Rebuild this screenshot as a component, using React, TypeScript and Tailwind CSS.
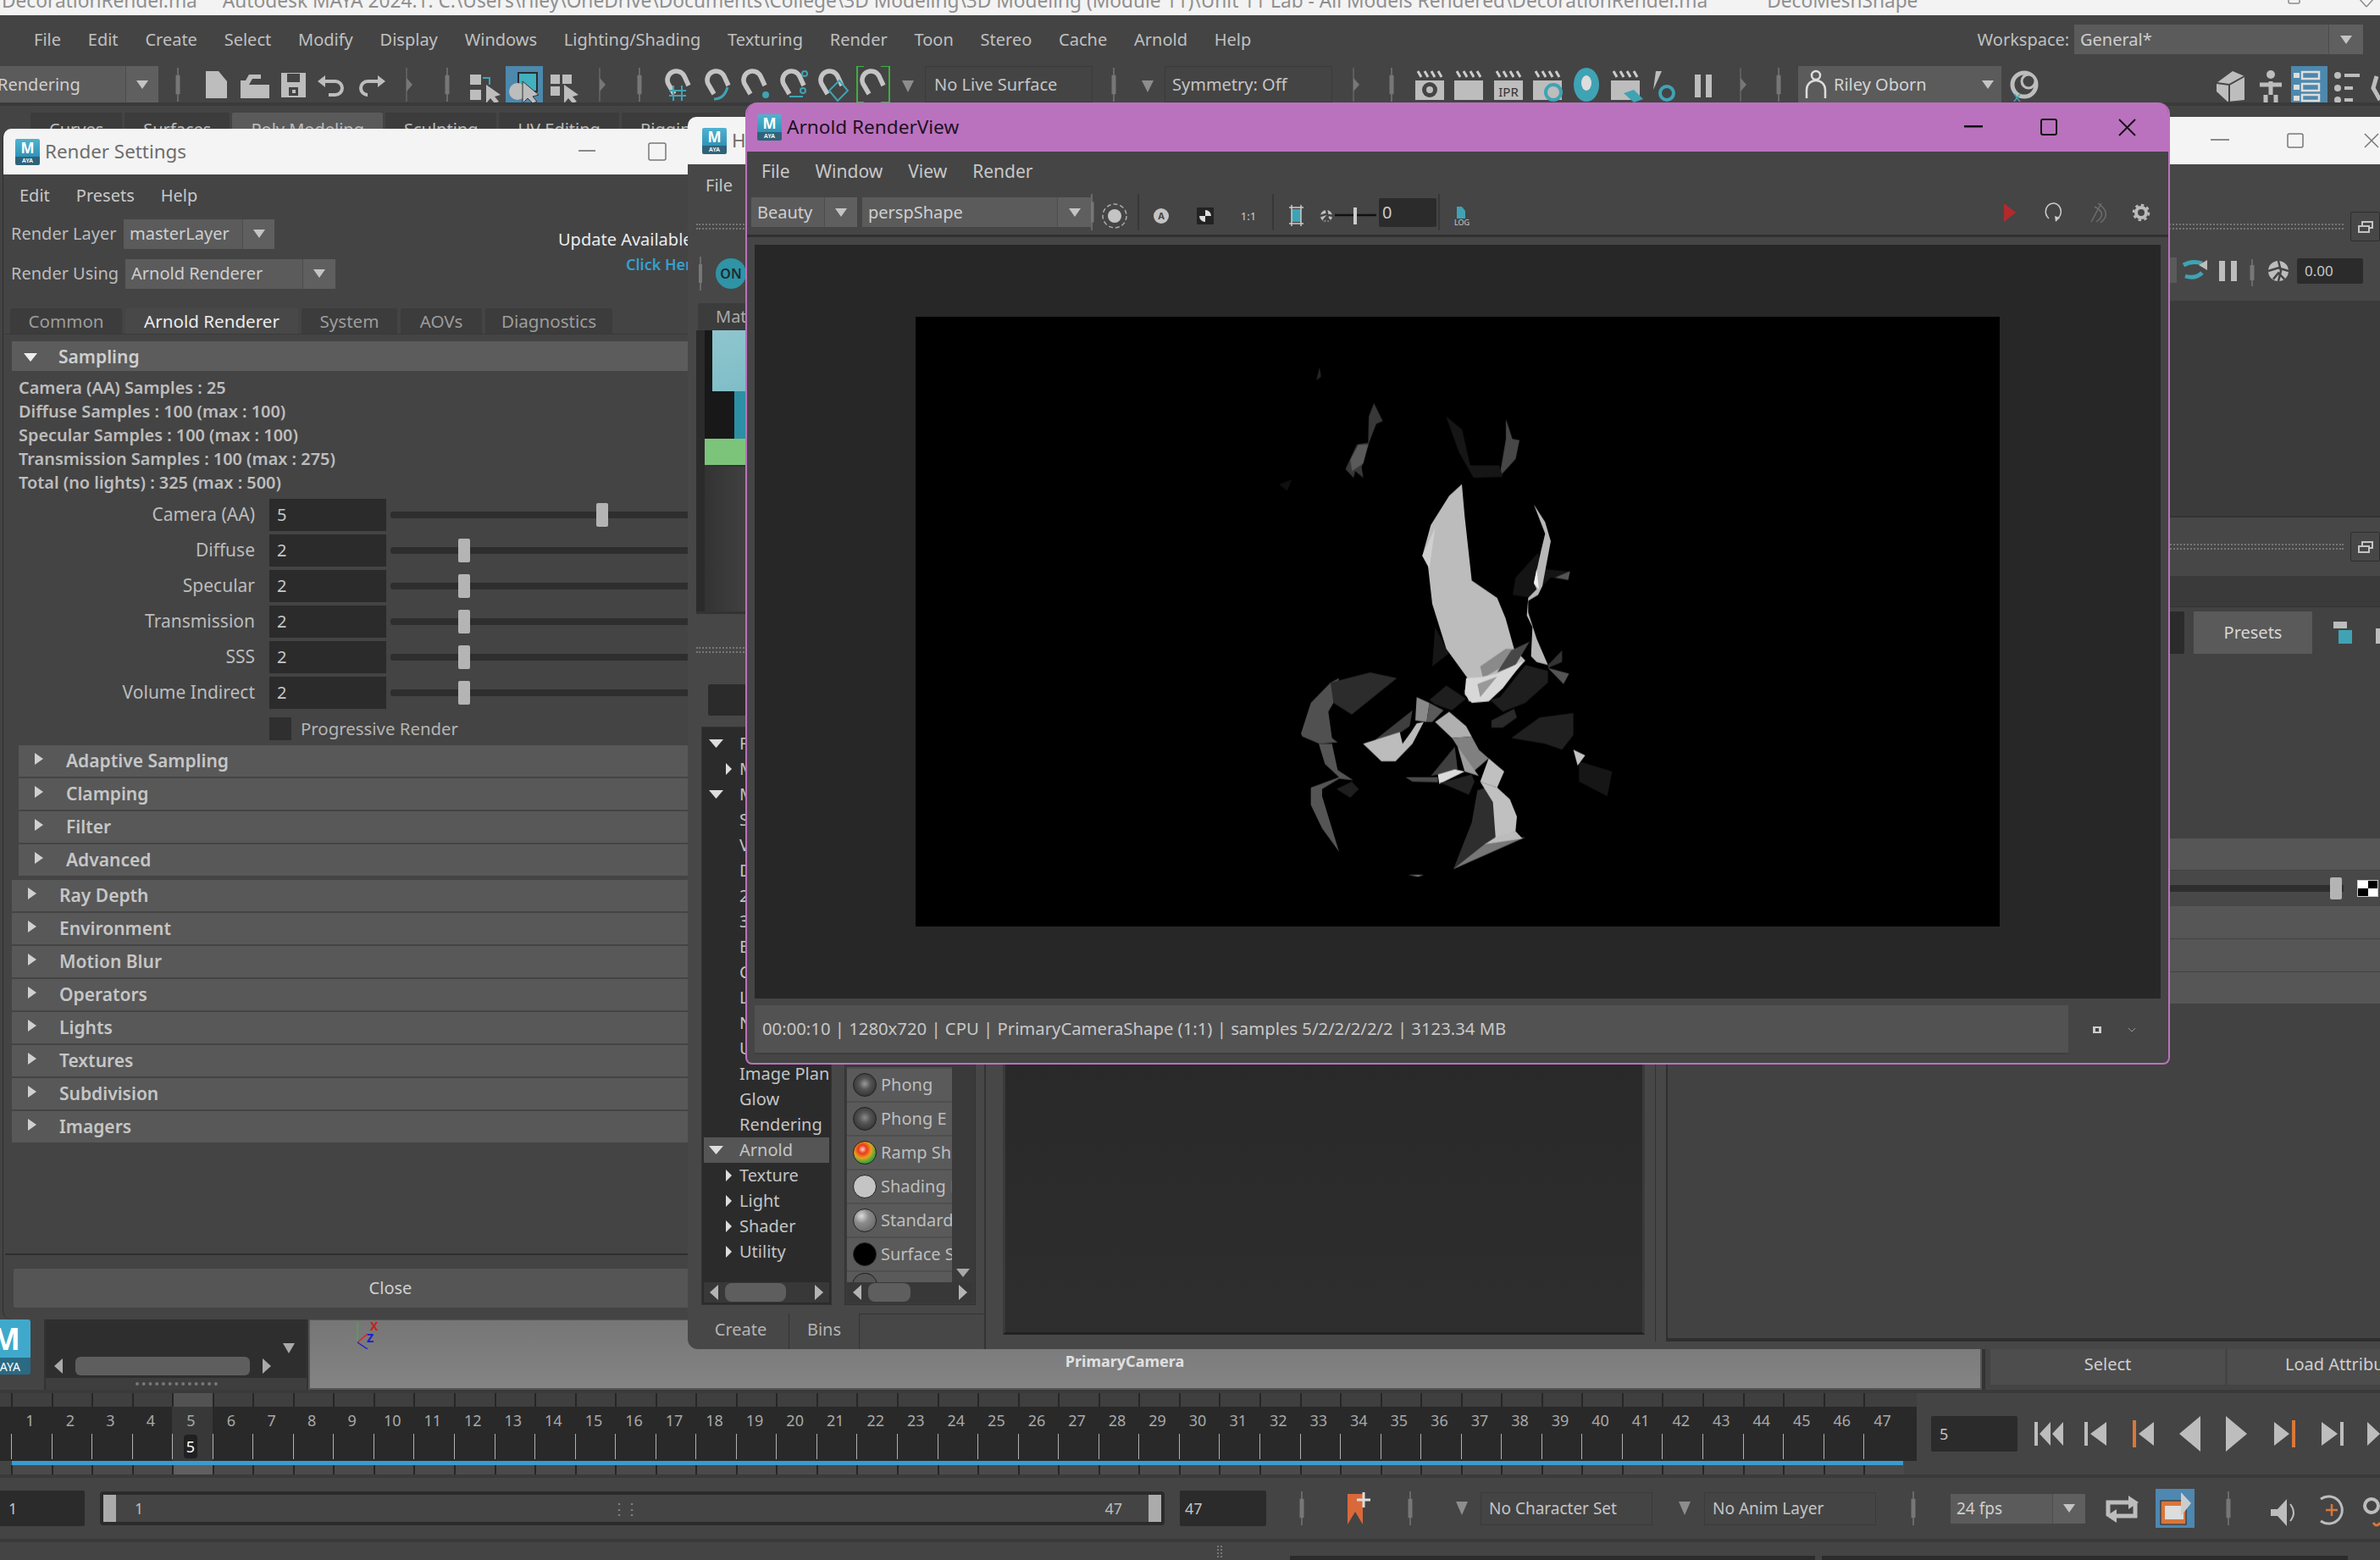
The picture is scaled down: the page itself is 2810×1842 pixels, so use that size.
import React from 'react';

const G = '#bdbdbd';
const TEAL = '#3fa3b4';

// Maya app badge: teal cube face with M, dark strip with AYA
const MayaBadge = () => (
  <div className="flex h-[31px] w-[29px] shrink-0 flex-col overflow-hidden rounded-[2px]">
    <div className="flex h-[21px] items-center justify-center bg-gradient-to-b from-[#4fb3cf] to-[#2f93b8] text-[17px] leading-none font-bold text-white">M</div>
    <div className="flex h-[10px] items-center justify-center bg-[#2f6379] text-[7px] leading-none font-semibold text-white">AYA</div>
  </div>
);

const Arrow = ({ className = 'ml-auto' }: { className?: string }) => (
  <svg className={className} width="16" height="12" viewBox="0 0 16 12"><polygon points="1,1 15,1 8,11" fill="#c4c4c4" /></svg>
);

const Dropdown = ({ text, className, arrowW, textClass = 'pl-[7px]' }: { text: string; className: string; arrowW: string; textClass?: string }) => (
  <div className={`flex shrink-0 items-stretch bg-[#5b5b5b] text-[#cfcfcf] ${className}`}>
    <div className={`flex flex-1 items-center overflow-hidden whitespace-nowrap ${textClass}`}>{text}</div>
    <div className={`flex items-center justify-center border-l border-[#4c4c4c] bg-[#5f5f5f] ${arrowW}`}><Arrow className="" /></div>
  </div>
);

const Handle = ({ x, y1, y2 }: { x: number; y1: number; y2: number }) => (
  <g>
    <line x1={x} x2={x} y1={y1} y2={y2} stroke="#777" strokeWidth="1.5" />
    <rect x={x - 2.5} y={y1 + (y2 - y1) * 0.22} width="5" height={(y2 - y1) * 0.56} fill="#777" />
  </g>
);

const Chevron = ({ x, y1, y2 }: { x: number; y1: number; y2: number }) => (
  <g>
    <line x1={x} x2={x} y1={y1} y2={y2} stroke="#666" strokeWidth="1.5" />
    <polygon points={`${x},${y1 + 12} ${x + 7},${(y1 + y2) / 2} ${x},${y2 - 12}`} fill="#777" />
  </g>
);

const Magnet = ({ x, accent }: { x: number; accent?: React.ReactNode }) => (
  <g transform={`translate(${x} 97)`}>
    <path d="M-4 14 L-11 2 A10 10 0 0 1 8 -7 L13 4" fill="none" stroke="#c4c4c4" strokeWidth="5.5" />
    {accent}
  </g>
);

const Clapper = ({ x, children }: { x: number; children?: React.ReactNode }) => (
  <g transform={`translate(${x} 83)`}>
    <rect x="0" y="0" width="34" height="9" fill="#444" />
    <path d="M3 1 L7 8 M11 1 L15 8 M19 1 L23 8 M27 1 L31 8" stroke="#ccc" strokeWidth="3" />
    <rect x="0" y="12" width="34" height="23" fill="#bdbdbd" />
    {children}
  </g>
);

const Aperture = ({ cx, cy, r }: { cx: number; cy: number; r: number }) => (
  <g>
    <circle cx={cx} cy={cy} r={r} fill="#bdbdbd" />
    <path d={`M${cx - r} ${cy} L${cx} ${cy - r * 0.3} L${cx + r} ${cy} M${cx} ${cy - r} L${cx + r * 0.25} ${cy} L${cx} ${cy + r} M${cx - r * 0.5} ${cy + r * 0.8} L${cx} ${cy + r * 0.2} L${cx + r * 0.6} ${cy + r * 0.8}`} stroke="#444" strokeWidth="2.5" fill="none" />
  </g>
);

const Dots = ({ className }: { className: string }) => (
  <div className={`flex flex-col gap-[3px] ${className}`}>
    <div className="h-[2px] border-t-2 border-dotted border-[#777]" />
    <div className="h-[2px] border-t-2 border-dotted border-[#777]" />
  </div>
);

const DockBtn = () => (
  <div className="ml-[8px] flex h-[35px] w-[35px] shrink-0 items-center justify-center rounded-[2px] border border-[#2e2e2e] bg-[#474747]">
    <svg width="18" height="14" viewBox="0 0 18 14"><rect x="5" y="1" width="12" height="7" fill="none" stroke="#c4c4c4" strokeWidth="2" /><rect x="1" y="6" width="12" height="7" fill="#474747" stroke="#c4c4c4" strokeWidth="2" /></svg>
  </div>
);

const MainShelf = () => (
  <div className="flex h-[43px] shrink-0 items-stretch">
    <Dropdown text="Rendering" className="w-[187px] text-[20px]" arrowW="w-[39px]" textClass="pl-0 -ml-[3px]" />
    <svg className="w-[905px] shrink-0" height="43" viewBox="187 78 905 43">
      <Handle x={210} y1={2 + 78} y2={120} />
      <path d="M243 84 H258 L268 96 V116 H243 Z" fill={G} />
      <path d="M284 116 V95 H290 L294 88 H308 V93 L298 93 L294 100 H318 V116 Z" fill={G} />
      <path d="M332 86 H361 V115 H332 Z" fill={G} /><rect x="339" y="87" width="15" height="10" fill="#444" /><rect x="341" y="103" width="11" height="10" fill="#444" /><rect x="345" y="106" width="4" height="4" fill={G} />
      <path d="M379 96 H396 A8 8 0 0 1 396 112 H388" fill="none" stroke={G} strokeWidth="4" /><polygon points="375,96 384,89 384,103" fill={G} />
      <path d="M451 96 H434 A8 8 0 0 0 434 112 H432" fill="none" stroke={G} strokeWidth="4" /><polygon points="455,96 446,89 446,103" fill={G} />
      <Chevron x={480} y1={80} y2={120} />
      <Handle x={528} y1={80} y2={120} />
      <rect x="555" y="88" width="13" height="12" fill={G} /><rect x="555" y="106" width="13" height="12" fill={G} /><path d="M570 92 H578 V100" stroke={TEAL} strokeWidth="2" fill="none" />
      <polygon points="574,100 574,122 579,116 584,122 589,120 584,114 591,112" fill={G} />
      <rect x="597" y="78" width="44" height="43" fill="#4d88ad" />
      <rect x="612" y="86" width="22" height="22" fill="#41b0bf" stroke="#2c2c2c" strokeWidth="2" />
      <circle cx="611" cy="108" r="10" fill={G} />
      <polygon points="617,96 617,122 623,116 629,122 634,120 629,114 636,112" fill={G} stroke="#333" strokeWidth="1" />
      <rect x="650" y="88" width="11" height="11" fill={G} /><rect x="664" y="88" width="11" height="11" fill={G} /><rect x="650" y="102" width="11" height="11" fill={G} />
      <polygon points="666,100 666,122 671,116 676,122 681,120 676,114 683,112" fill={G} />
      <Chevron x={708} y1={80} y2={120} />
      <Handle x={755} y1={80} y2={120} />
      <Magnet x={800} accent={<path d="M-5 4 V22 M5 4 V22 M-10 10 H10 M-10 16 H10" stroke={TEAL} strokeWidth="2" />} />
      <Magnet x={847} accent={<path d="M-4 20 Q8 20 12 6" stroke={TEAL} strokeWidth="3" fill="none" />} />
      <Magnet x={890} accent={<circle cx="14" cy="15" r="4" fill={TEAL} />} />
      <Magnet x={936} accent={<g fill="none" stroke={TEAL} strokeWidth="2"><circle cx="14" cy="-10" r="3" /><circle cx="12" cy="10" r="3" /><path d="M-4 17 H12" /></g>} />
      <Magnet x={981} accent={<polygon points="10,-2 20,10 8,22 -2,10" fill="none" stroke={TEAL} strokeWidth="2" />} />
      <Magnet x={1030} />
      <path d="M1020 78 H1012 V121 H1020 M1040 78 H1050 V121 H1040" fill="none" stroke="#3ecf3e" strokeWidth="1.5" />
      <polygon points="1065,95 1079,95 1072,109" fill="#8d8d8d" />
    </svg>
    <div className="flex w-[198px] shrink-0 items-center border border-[#3b3b3b] pl-[10px] text-[20px] text-[#c4c4c4]">No Live Surface</div>
    <svg className="w-[85px] shrink-0" height="43" viewBox="1290 78 85 43">
      <Handle x={1315} y1={80} y2={120} />
      <polygon points="1348,95 1362,95 1355,109" fill="#8d8d8d" />
    </svg>
    <div className="flex w-[198px] shrink-0 items-center border border-[#3b3b3b] pl-[8px] text-[20px] text-[#c4c4c4]">Symmetry: Off</div>
    <svg className="w-[550px] shrink-0" height="43" viewBox="1573 78 550 43">
      <Chevron x={1598} y1={80} y2={120} />
      <Handle x={1643} y1={80} y2={120} />
      <Clapper x={1671}><circle cx="17" cy="23" r="9" fill="#444" /><circle cx="17" cy="23" r="4" fill={G} /></Clapper>
      <Clapper x={1717} />
      <Clapper x={1764}><text x="17" y="31" fontSize="15" textAnchor="middle" fill="#333">IPR</text></Clapper>
      <Clapper x={1810} />
      <circle cx="1834" cy="109" r="9" fill="none" stroke={TEAL} strokeWidth="4" />
      <ellipse cx="1873" cy="100" rx="15" ry="20" fill={TEAL} /><ellipse cx="1873" cy="98" rx="6" ry="9" fill="#ddd" />
      <Clapper x={1902} />
      <polygon points="1929,106 1940,117 1929,121 1917,110" fill={TEAL} />
      <path d="M1955 84 L1962 84 L1952 106 Z" fill={G} /><circle cx="1968" cy="110" r="8" fill="none" stroke={TEAL} strokeWidth="4" />
      <rect x="2001" y="88" width="7" height="27" fill={G} /><rect x="2014" y="88" width="7" height="27" fill={G} />
      <Chevron x={2055} y1={80} y2={120} />
      <Handle x={2100} y1={80} y2={120} />
    </svg>
    <div className="flex w-[240px] shrink-0 items-center gap-[8px] bg-[#5b5b5b] pl-[8px] text-[20px] text-[#d4d4d4]">
      <svg width="26" height="36" viewBox="0 0 26 36"><circle cx="13" cy="7" r="5" fill="none" stroke="#ddd" strokeWidth="2.5" /><path d="M2 34 V24 A11 11 0 0 1 24 24 V34" fill="none" stroke="#ddd" strokeWidth="2.5" /></svg>
      <span className="whitespace-nowrap">Riley Oborn</span>
      <Arrow className="mr-[8px] ml-auto" />
    </div>
    <svg className="w-[447px] shrink-0" height="43" viewBox="2363 78 447 43">
      <circle cx="2390" cy="100" r="14" fill="none" stroke={G} strokeWidth="5" /><circle cx="2395" cy="96" r="8" fill="#444" stroke={G} strokeWidth="3" />
      <text x="2377" y="120" fontSize="17" fill={TEAL}>x</text>
      <path d="M2617 98 L2636 84 L2650 90 V118 L2630 120 L2617 108 Z" fill={G} /><path d="M2632 100 V120 M2617 98 L2632 100 L2650 90" stroke="#444" strokeWidth="2" fill="none" />
      <circle cx="2681" cy="88" r="5" fill={G} /><path d="M2668 100 H2694 M2681 96 V112 M2675 112 V122 M2687 112 V122" stroke={G} strokeWidth="5" />
      <rect x="2705" y="78" width="43" height="43" fill="#4d88ad" />
      <g fill="none" stroke="#ddd" strokeWidth="2.5"><rect x="2718" y="85" width="20" height="8" /><rect x="2718" y="99" width="20" height="8" /><rect x="2718" y="112" width="20" height="7" /></g>
      <g fill="#ddd"><rect x="2708" y="86" width="7" height="6" /><rect x="2708" y="100" width="7" height="6" /><rect x="2708" y="113" width="7" height="6" /></g>
      <g fill={G}><circle cx="2760" cy="89" r="4" /><circle cx="2760" cy="104" r="4" /><circle cx="2760" cy="118" r="4" /><rect x="2768" y="87" width="18" height="4" /><rect x="2768" y="102" width="10" height="4" /><rect x="2768" y="116" width="10" height="4" /></g>
      <path d="M2806 90 L2802 104 L2810 118" fill="none" stroke={G} strokeWidth="5" />
    </svg>
  </div>
);

const TimeSlider = () => {
  const frames = Array.from({ length: 47 }, (_, i) => i + 1);
  return (
    <div className="flex h-[96px] shrink-0">
      <div className="flex w-[2263px] shrink-0 flex-col">
        <div className="h-[16px] bg-[#3f3f3f] pl-[13px]">
          <div className="grid h-full grid-cols-[repeat(47,47.55px)]">
            {frames.map((f) => (
              <div key={f} className={`border-l-2 border-[#262626] ${f === 5 ? 'bg-[#525252]' : ''}`} />
            ))}
          </div>
        </div>
        <div className="h-[64px] bg-[#292929] pl-[13px]">
          <div className="grid h-full grid-cols-[repeat(47,47.55px)]">
            {frames.map((f) => (
              <div key={f} className={`flex flex-col ${f === 5 ? 'bg-[#383838]' : ''}`}>
                <div className="flex h-[32px] items-center justify-center pr-[3px] text-[18px] leading-none text-[#a8a8a8]">{f}</div>
                <div className="flex h-[30px] items-center justify-center border-l border-[#b0b0b0] pr-[5px]">
                  {f === 5 && <span className="rounded-[4px] bg-[#202020] px-[3px] text-[18px] leading-[28px] text-white">5</span>}
                </div>
              </div>
            ))}
          </div>
        </div>
        <div className="ml-[14px] h-[5px] w-[2233px] bg-[#3a9bd0]" />
        <div className="h-[11px] pl-[13px]">
          <div className="grid h-full grid-cols-[repeat(47,47.55px)]">
            {frames.map((f) => (
              <div key={f} className={`border-l-2 border-[#262626] ${f === 5 ? 'bg-[#5f5f5f]' : 'bg-[#4a4a4a]'}`} />
            ))}
          </div>
        </div>
      </div>
      <div className="ml-[17px] mt-[27px] flex h-[42px] w-[102px] shrink-0 items-center rounded-[2px] bg-[#2b2b2b] pl-[10px] text-[18px] text-[#c4c4c4]">5</div>
      <svg className="w-[428px] shrink-0" height="96" viewBox="2382 1645 428 96">
        <g fill={G}>
          <rect x="2402" y="1679" width="4" height="28" /><polygon points="2421,1679 2421,1707 2408,1693" /><polygon points="2436,1679 2436,1707 2423,1693" />
          <rect x="2461" y="1679" width="4" height="28" /><polygon points="2487,1679 2487,1707 2468,1693" />
          <polygon points="2543,1679 2543,1707 2525,1693" />
          <polygon points="2598,1672 2598,1714 2573,1693" />
          <polygon points="2628,1672 2628,1714 2653,1693" />
          <polygon points="2685,1679 2685,1707 2703,1693" />
          <polygon points="2741,1679 2741,1707 2760,1693" /><rect x="2763" y="1679" width="4" height="28" />
          <polygon points="2795,1679 2795,1707 2810,1693" />
        </g>
        <rect x="2518" y="1677" width="4" height="32" fill="#d97838" /><rect x="2706" y="1677" width="4" height="32" fill="#d97838" />
      </svg>
    </div>
  );
};

const RangeRow = () => (
  <div className="flex h-[72px] shrink-0 items-center">
    <div className="flex h-[42px] w-[100px] shrink-0 items-center rounded-r-[2px] bg-[#2b2b2b] pl-[10px] text-[18px] text-[#c4c4c4]">1</div>
    <div className="ml-[18px] flex h-[40px] w-[1257px] shrink-0 items-stretch rounded-[4px] border-[4px] border-[#2b2b2b] bg-[#444]">
      <div className="w-[15px] bg-[#ababab]" />
      <div className="ml-[22px] flex w-[1180px] items-center justify-between pr-[14px] text-[18px] text-[#bdbdbd]">
        <span>1</span>
        <span className="border-x-0 text-[#888] tracking-[-3px]">⋮⋮</span>
        <span>47</span>
      </div>
      <div className="ml-auto w-[15px] bg-[#ababab]" />
    </div>
    <div className="ml-[18px] flex h-[42px] w-[102px] shrink-0 items-center rounded-[2px] bg-[#2b2b2b] pl-[6px] text-[18px] text-[#c4c4c4]">47</div>
    <svg className="w-[253px] shrink-0" height="72" viewBox="1495 1745 253 72">
      <Handle x={1537} y1={1761} y2={1801} />
      <path d="M1591 1764 H1609 V1800 L1600 1785 L1591 1800 Z" fill="#d9693a" />
      <path d="M1610 1762 V1780 M1602 1771 H1618" stroke="#ddd" strokeWidth="3" />
      <Handle x={1665} y1={1761} y2={1801} />
      <polygon points="1719,1773 1733,1773 1726,1789" fill="#8d8d8d" />
    </svg>
    <div className="flex h-[39px] w-[203px] shrink-0 items-center border border-[#3a3a3a] pl-[9px] text-[19px] whitespace-nowrap text-[#c4c4c4]">No Character Set</div>
    <svg className="w-[61px] shrink-0" height="72" viewBox="1951 1745 61 72"><polygon points="1982,1773 1996,1773 1989,1789" fill="#8d8d8d" /></svg>
    <div className="flex h-[39px] w-[203px] shrink-0 items-center border border-[#3a3a3a] pl-[9px] text-[19px] whitespace-nowrap text-[#c4c4c4]">No Anim Layer</div>
    <svg className="w-[88px] shrink-0" height="72" viewBox="2215 1745 88 72"><Handle x={2259} y1={1761} y2={1801} /></svg>
    <Dropdown text="24 fps" className="h-[35px] w-[159px] text-[19px]" arrowW="w-[39px]" />
    <svg className="w-[348px] shrink-0" height="72" viewBox="2462 1745 348 72">
      <path d="M2489 1790 V1774 H2515 M2521 1774 V1790 H2497" fill="none" stroke={G} strokeWidth="5" /><polygon points="2513,1766 2525,1774 2513,1782" fill={G} /><polygon points="2499,1782 2487,1790 2499,1798" fill={G} />
      <rect x="2545" y="1758" width="46" height="46" fill="#4e87b0" />
      <rect x="2551" y="1772" width="30" height="28" fill="#d9763a" stroke="#222" strokeWidth="1" /><rect x="2556" y="1778" width="22" height="16" fill="#ddd" />
      <polygon points="2575,1762 2587,1775 2575,1790" fill="#ccc" />
      <Handle x={2631} y1={1761} y2={1801} />
      <polygon points="2681,1782 2689,1782 2700,1770 2700,1802 2689,1790 2681,1790" fill={G} /><path d="M2704 1776 Q2712 1786 2704 1796" stroke={G} strokeWidth="2" fill="none" />
      <path d="M2740 1770 A16 16 0 1 1 2740 1796" fill="none" stroke={G} strokeWidth="3" /><path d="M2753 1776 V1790 M2746 1783 H2760" stroke="#d9763a" strokeWidth="2.5" />
      <circle cx="2800" cy="1778" r="8" fill="none" stroke={G} strokeWidth="4" /><path d="M2802 1798 Q2806 1804 2810 1798" stroke="#d9763a" strokeWidth="3" fill="none" />
    </svg>
  </div>
);

const Sampler = ({ label, value, thumb }: { label: string; value: string; thumb: string }) => (
  <div className="flex h-[42px] items-center">
    <div className="w-[287px] text-right text-[21px] text-[#bcbcbc]">{label}</div>
    <div className="ml-[17px] flex h-[38px] w-[138px] shrink-0 items-center bg-[#2b2b2b] pl-[9px] text-[20px] text-[#c8c8c8]">{value}</div>
    <div className="relative ml-[5px] h-[8px] flex-1 rounded-[3px] bg-[#2e2e2e]">
      <div className={`absolute -top-[10px] h-[28px] w-[14px] rounded-[2px] bg-[#b4b4b4] ${thumb}`} />
    </div>
  </div>
);

const Section = ({ title, sub, gap }: { title: string; sub?: boolean; gap?: boolean }) => (
  <div className={`mb-[2px] flex h-[37px] items-center bg-[#585858] pl-[19px] ${sub ? 'ml-[8px]' : ''} ${gap ? 'mt-[3px]' : ''}`}>
    <svg className="-mt-[6px]" width="10" height="14" viewBox="0 0 10 14"><polygon points="0,0 10,7 0,14" fill="#d0d0d0" /></svg>
    <span className="ml-[27px] text-[21px] font-semibold text-[#c6c6c6]">{title}</span>
  </div>
);

const RenderSettings = () => (
  <div className="absolute top-[152px] left-[3px] z-10 flex h-[1406px] w-[900px] flex-col overflow-hidden rounded-[10px] border-x border-[#2f2f2f] bg-[#444]">
    <div className="flex h-[54px] shrink-0 items-center bg-[#f4f4f4] pl-[14px]">
      <MayaBadge />
      <span className="ml-[6px] text-[22.4px] text-[#6d6d6d]">Render Settings</span>
      <svg className="ml-[463px]" width="20" height="4" viewBox="0 0 20 4"><rect width="20" height="2" fill="#8a8a8a" /></svg>
      <svg className="ml-[62px]" width="22" height="22" viewBox="0 0 22 22"><rect x="1" y="1" width="20" height="20" rx="2" fill="none" stroke="#777" strokeWidth="1.5" /></svg>
    </div>
    <div className="flex h-[50px] shrink-0 items-center gap-[31px] pl-[19px] text-[20px] text-[#c8c8c8]"><span>Edit</span><span>Presets</span><span>Help</span></div>
    <div className="flex h-[40px] shrink-0 items-center text-[20px] text-[#bcbcbc]">
      <span className="w-[142px] pl-[9px]">Render Layer</span>
      <Dropdown text="masterLayer" className="h-[35px] w-[178px]" arrowW="w-[38px]" />
      <span className="mt-[14px] ml-[335px] text-[#ececec]">Update Available</span>
    </div>
    <div className="flex h-[54px] shrink-0 items-center text-[20px] text-[#bcbcbc]">
      <span className="w-[144px] pl-[9px]">Render Using</span>
      <Dropdown text="Arnold Renderer" className="h-[35px] w-[248px]" arrowW="w-[39px]" />
      <span className="-mt-[22px] ml-[343px] text-[18px] font-semibold text-[#36a0cb]">Click Here</span>
    </div>
    <div className="mt-[13px] flex h-[32px] shrink-0 items-stretch gap-[4px] border-b border-[#3a3a3a] pt-[1px] pl-[8px] text-[20.6px] text-[#9c9c9c]">
      <div className="flex w-[132px] items-center justify-center rounded-t-[3px] bg-[#3c3c3c]">Common</div>
      <div className="flex w-[204px] items-center justify-center rounded-t-[3px] bg-[#484848] text-[#ebebeb]">Arnold Renderer</div>
      <div className="flex w-[113px] items-center justify-center rounded-t-[3px] bg-[#3c3c3c]">System</div>
      <div className="flex w-[96px] items-center justify-center rounded-t-[3px] bg-[#3c3c3c]">AOVs</div>
      <div className="flex w-[150px] items-center justify-center rounded-t-[3px] bg-[#3c3c3c]">Diagnostics</div>
    </div>
    <div className="ml-[10px] flex flex-1 flex-col overflow-hidden">
      <div className="mt-[8px] flex h-[35px] shrink-0 items-center bg-[#5c5c5c] pt-[2px] pl-[14px]">
        <svg width="16" height="10" viewBox="0 0 16 10"><polygon points="0,0 16,0 8,10" fill="#eee" /></svg>
        <span className="ml-[25px] text-[21px] font-semibold text-[#cfcfcf]">Sampling</span>
      </div>
      <div className="mt-[6px] flex flex-col pl-[8px] text-[19.9px] leading-[28px] font-semibold text-[#bdbdbd]">
        <div>Camera (AA) Samples : 25</div>
        <div>Diffuse Samples : 100 (max : 100)</div>
        <div>Specular Samples : 100 (max : 100)</div>
        <div>Transmission Samples : 100 (max : 275)</div>
        <div>Total (no lights) : 325 (max : 500)</div>
      </div>
      <div className="mt-[3px] flex flex-col">
        <Sampler label="Camera (AA)" value="5" thumb="left-[243px]" />
        <Sampler label="Diffuse" value="2" thumb="left-[80px]" />
        <Sampler label="Specular" value="2" thumb="left-[80px]" />
        <Sampler label="Transmission" value="2" thumb="left-[80px]" />
        <Sampler label="SSS" value="2" thumb="left-[80px]" />
        <Sampler label="Volume Indirect" value="2" thumb="left-[80px]" />
      </div>
      <div className="mt-[6px] flex h-[30px] items-center pl-[304px] text-[20.4px] text-[#b4b4b4]">
        <div className="h-[27px] w-[26px] bg-[#2f2f2f]" />
        <span className="ml-[11px]">Progressive Render</span>
      </div>
      <div className="mt-[5px] flex flex-col">
        {['Adaptive Sampling', 'Clamping', 'Filter', 'Advanced'].map((t) => <Section key={t} title={t} sub />)}
        {['Ray Depth', 'Environment', 'Motion Blur', 'Operators', 'Lights', 'Textures', 'Subdivision', 'Imagers'].map((t) => <Section key={t} title={t} gap={t === 'Ray Depth'} />)}
      </div>
    </div>
    <div className="mx-[2px] h-[2px] shrink-0 bg-[#2e2e2e]" />
    <div className="mt-[16px] mb-[14px] ml-[12px] flex h-[46px] w-[890px] shrink-0 items-center justify-center rounded-[2px] bg-[#555] text-[20px] text-[#d0d0d0]">Close</div>
  </div>
);

const treeRows: { t: string; a?: 'open' | 'shut'; deep?: boolean }[] = [
  { t: 'Favorites', a: 'open' },
  { t: 'Mental', a: 'shut', deep: true },
  { t: 'Maya', a: 'open' },
  { t: 'Surface' },
  { t: 'Volumetric' },
  { t: 'Displacement' },
  { t: '2D Textures' },
  { t: '3D Textures' },
  { t: 'Env Textures' },
  { t: 'Color Utilities' },
  { t: 'Lights' },
  { t: 'Nodes' },
  { t: 'Utilities' },
  { t: 'Image Planes' },
  { t: 'Glow' },
  { t: 'Rendering' },
  { t: 'Arnold', a: 'open' },
  { t: 'Texture', a: 'shut', deep: true },
  { t: 'Light', a: 'shut', deep: true },
  { t: 'Shader', a: 'shut', deep: true },
  { t: 'Utility', a: 'shut', deep: true },
];

const Scroller = ({ thumb }: { thumb: string }) => (
  <div className="flex h-[24px] shrink-0 items-center justify-between bg-[#383838] px-[7px]">
    <svg width="10" height="18" viewBox="0 0 10 18"><polygon points="10,0 10,18 0,9" fill="#b4b4b4" /></svg>
    <div className={`mr-auto ml-[8px] h-[22px] rounded-[8px] bg-[#5e5e5e] ${thumb}`} />
    <svg width="10" height="18" viewBox="0 0 10 18"><polygon points="0,0 0,18 10,9" fill="#b4b4b4" /></svg>
  </div>
);

const swatches: { t: string; c: string }[] = [
  { t: 'Phong', c: 'bg-[radial-gradient(circle_at_50%_45%,#9a9a9a_0%,#555_35%,#222_100%)]' },
  { t: 'Phong E', c: 'bg-[radial-gradient(circle_at_50%_45%,#8a8a8a_0%,#555_35%,#222_100%)]' },
  { t: 'Ramp Shader', c: 'bg-[radial-gradient(circle_at_40%_35%,#ffd0c0_0%,#e83a1a_22%,#e8a020_45%,#3aa63a_70%,#1a6a8a_100%)]' },
  { t: 'Shading Map', c: 'bg-[#c4c4c4]' },
  { t: 'Standard', c: 'bg-[radial-gradient(circle_at_35%_30%,#dcdcdc_0%,#8c8c8c_35%,#5a5a5a_100%)]' },
  { t: 'Surface Shader', c: 'bg-black' },
];

const HypershadeLeft = () => (
  <div className="flex w-[350px] shrink-0 flex-col">
    <div className="flex h-[56px] shrink-0 items-center pb-[6px] pl-[21px] text-[20px] text-[#c8c8c8]">File</div>
    <Dots className="mt-[14px] ml-[10px]" />
    <div className="flex h-[87px] shrink-0 items-center pt-[16px] pl-[12px]">
      <svg width="6" height="40" viewBox="0 0 6 40"><line x1="3" x2="3" y1="0" y2="40" stroke="#777" strokeWidth="1.5" /><rect x="1" y="9" width="4" height="22" fill="#777" /></svg>
      <div className="ml-[15px] flex h-[36px] w-[36px] items-center justify-center rounded-full bg-[#2f94a6] text-[16px] font-semibold text-[#1d2b2f]">ON</div>
    </div>
    <div className="ml-[12px] flex h-[32px] w-[100px] shrink-0 items-center rounded-t-[2px] bg-[#3c3c3c] pl-[21px] text-[20px] text-[#aaa]">Materials</div>
    <div className="ml-[10px] flex h-[332px] shrink-0 flex-col overflow-hidden border-l-[10px] border-[#2b2b2b]">
      <div className="flex h-[128px] shrink-0 flex-col bg-[#181818] pl-[9px]">
        <div className="h-[72px] bg-[linear-gradient(160deg,#8fc6ce,#6cb3be)]" />
        <div className="ml-[26px] flex-1 bg-[#2d8fa3]" />
      </div>
      <div className="h-[33px] shrink-0 border-b-2 border-[#333] bg-[#7dc47b]" />
      <div className="flex-1 bg-[linear-gradient(90deg,#333_0%,#4a4a4a_25%,#111_70%)]" />
    </div>
    <div className="ml-[10px] h-[3px] shrink-0 bg-[#333]" />
    <Dots className="mt-[39px] ml-[10px]" />
    <div className="mt-[37px] ml-[24px] h-[37px] w-[200px] shrink-0 rounded-[2px] bg-[#2b2b2b]" />
    <div className="mt-[13px] ml-[16px] flex h-[683px] shrink-0">
      <div className="flex w-[154px] flex-col border border-[#333] bg-[#2b2b2b] p-[2px]">
        <div className="flex flex-1 flex-col overflow-hidden pt-[1.5px]">
          {treeRows.map((r) => (
            <div key={r.t} className={`flex h-[30px] shrink-0 items-center text-[20px] whitespace-nowrap text-[#c4c4c4] ${r.t === 'Arnold' ? 'bg-[#555]' : ''}`}>
              <div className="flex w-[42px] shrink-0 justify-start">
                {r.a === 'open' && <svg className="ml-[6px]" width="17" height="10" viewBox="0 0 17 10"><polygon points="0,0 17,0 8.5,10" fill="#ddd" /></svg>}
                {r.a === 'shut' && <svg className="ml-[26px]" width="7" height="14" viewBox="0 0 7 14"><polygon points="0,0 7,7 0,14" fill="#ddd" /></svg>}
              </div>
              <span>{r.t}</span>
            </div>
          ))}
        </div>
        <Scroller thumb="w-[72px]" />
      </div>
      <div className="ml-[15px] flex w-[155px] flex-col border border-[#333] bg-[#3a3a3a] p-[2px] pr-[2px]">
        <div className="flex flex-1 overflow-hidden">
          <div className="flex w-[124px] flex-col justify-end overflow-hidden whitespace-nowrap">
            {swatches.map((s) => (
              <div key={s.t} className="flex h-[40px] shrink-0 items-center overflow-hidden border-t-2 border-[#4f4f4f] bg-[#5a5a5a] pl-[7px] text-[20px] text-[#bebebe]">
                <div className={`h-[28px] w-[28px] shrink-0 rounded-full border border-[#222] ${s.c}`} />
                <span className="ml-[5px]">{s.t}</span>
              </div>
            ))}
            <div className="flex h-[14px] shrink-0 items-start overflow-hidden border-t-2 border-[#4f4f4f] bg-[#5a5a5a] pl-[7px]">
              <div className="mt-[2px] h-[28px] w-[28px] shrink-0 rounded-full bg-[#555] ring-1 ring-[#222]" />
            </div>
          </div>
          <div className="flex flex-1 flex-col items-center justify-end pb-[6px]"><svg width="16" height="10" viewBox="0 0 16 10"><polygon points="0,0 16,0 8,10" fill="#a8a8a8" /></svg></div>
        </div>
        <Scroller thumb="w-[50px]" />
      </div>
    </div>
    <div className="flex flex-1 items-stretch pl-[16px] text-[20px] text-[#b4b4b4]">
      <div className="mt-[10px] flex w-[104px] items-center justify-center border-r border-[#333] pr-[10px] pb-[4px]">Create</div>
      <div className="mt-[10px] flex w-[83px] items-center justify-center border-r border-[#333] pb-[4px]">Bins</div>
      <div className="mt-[10px] flex-1 border-t border-[#333]" />
    </div>
  </div>
);

const HypershadeRight = () => (
  <div className="flex flex-1 flex-col border-l-2 border-[#333]">
    <div className="h-[56px] shrink-0" />
    <div className="flex h-[361px] shrink-0 flex-col border-b-2 border-[#333]">
      <div className="flex h-[35px] shrink-0 items-center justify-end"><Dots className="w-[210px]" /><DockBtn /></div>
      <div className="flex h-[70px] shrink-0 items-center justify-end">
        <svg className="mr-[0px]" width="220" height="36" viewBox="2492 0 220 36">
          <rect x="2562" y="2" width="8" height="30" fill="#5a5a5a" />
          <path d="M2578 11 Q2588 5 2600 9 M2580 24 Q2592 28 2600 20" fill="none" stroke={TEAL} strokeWidth="5" /><polygon points="2606,5 2596,11 2606,17" fill={G} />
          <rect x="2620" y="6" width="7" height="24" fill={G} /><rect x="2634" y="6" width="7" height="24" fill={G} />
          <Handle x={2659} y1={4} y2={36} />
          <Aperture cx={2690} cy={18} r={12} />
        </svg>
        <div className="mr-[20px] flex h-[30px] w-[78px] items-center rounded-[2px] bg-[#2b2b2b] pl-[9px] text-[17px] text-[#c8c8c8]">0.00</div>
      </div>
      <div className="flex-1 bg-[#3b3b3b]" />
    </div>
    <div className="flex h-[69px] shrink-0 items-center justify-end"><Dots className="w-[240px]" /><DockBtn /></div>
    <div className="h-[37px] shrink-0 border-b border-[#333] bg-[#3a3a3a]" />
    <div className="flex h-[55px] shrink-0 items-center justify-end bg-[#424242] pt-[5px]">
      <div className="mr-[11px] h-[50px] w-[40px] rounded-[2px] bg-[#2b2b2b]" />
      <div className="flex h-[50px] w-[140px] items-center justify-center bg-[#5a5a5a] text-[20px] text-[#d6d6d6]">Presets</div>
      <svg className="ml-[25px]" width="55" height="26" viewBox="0 0 55 26">
        <rect x="0" y="0" width="16" height="8" fill={G} /><path d="M6 10 H22 V26 H6 Z" fill={TEAL} />
        <rect x="50" y="8" width="5" height="18" fill={G} />
      </svg>
    </div>
    <div className="flex flex-1 items-stretch pb-[9px]">
      <div className="mb-[8px] ml-[20px] w-[758px] shrink-0 border-[3px] border-[#3a3a3a] border-b-[#222] bg-[linear-gradient(180deg,#222,#2e2e2e)]" />
      <div className="mx-[12px] w-px bg-[#333]" />
      <div className="flex flex-1 flex-col border-b-[4px] border-l-2 border-[#2e2e2e] bg-[#424242]">
        <div className="h-[218px] shrink-0" />
        <div className="mb-[1px] h-[37px] shrink-0 bg-[#565656]" />
        <div className="flex h-[42px] shrink-0 items-center justify-end bg-[#484848]">
          <div className="relative h-[8px] w-[400px] bg-[#2e2e2e]"><div className="absolute -top-[9px] right-[2px] h-[26px] w-[14px] rounded-[2px] bg-[#b4b4b4]" /></div>
          <div className="mr-[2px] ml-[16px] grid h-[20px] w-[25px] grid-cols-2 border border-[#ccc]"><div className="bg-white" /><div className="bg-black" /><div className="bg-black" /><div className="bg-white" /></div>
        </div>
        <div className="mb-[1px] h-[38px] shrink-0 bg-[#565656]" />
        <div className="mb-[1px] h-[38px] shrink-0 bg-[#565656]" />
        <div className="h-[37px] shrink-0 bg-[#565656]" />
      </div>
    </div>
  </div>
);

const Hypershade = () => (
  <div className="absolute top-[138px] left-[812px] z-20 flex h-[1455px] w-[1998px] flex-col overflow-hidden rounded-tl-[10px] rounded-bl-[12px] bg-[#474747]">
    <div className="flex h-[56px] shrink-0 items-center bg-[#f4f4f4] pl-[17px]">
      <MayaBadge />
      <span className="ml-[6px] text-[22.4px] text-[#6d6d6d]">Hypershade</span>
      <svg className="ml-auto" width="22" height="4" viewBox="0 0 22 4"><rect width="22" height="2" fill="#8a8a8a" /></svg>
      <svg className="ml-[68px]" width="20" height="18" viewBox="0 0 20 18"><rect x="1" y="1" width="18" height="16" rx="2" fill="none" stroke="#777" strokeWidth="1.5" /></svg>
      <svg className="mr-[0px] ml-[70px]" width="20" height="20" viewBox="0 0 20 20"><path d="M2 2 L18 18 M18 2 L2 18" stroke="#777" strokeWidth="1.5" /></svg>
    </div>
    <div className="flex flex-1">
      <HypershadeLeft />
      <HypershadeRight />
    </div>
  </div>
);

const fig = (
  <svg className="h-[720px] w-[1280px] bg-black" viewBox="0 0 1280 720">
    <g className="blur-[0.5px]">
    <g transform="translate(320 26) scale(0.3827 0.4464)">
      <polygon points="410,75 415,100 400,110" fill="#262626" />
      <polygon points="578,170 605,218 585,225 565,270 540,340 545,368 520,350 515,368 490,345 525,280 560,275 562,205" fill="#383838" />
      <polygon points="530,280 560,280 545,330 510,350 505,320" fill="#5a5a5a" />
      <polygon points="985,212 1005,265 1027,268 1015,318 965,365 985,265" fill="#474747" />
      <polygon points="800,205 850,240 875,335 965,335 975,365 885,368 840,300" fill="#161616" />
      <polygon points="285,385 325,372 310,402" fill="#101010" />
    </g>
    <g transform="translate(400 146) scale(0.3333 0.3444)">
      <polygon points="925,470 1005,385 1020,440 1118,450 1110,480 1050,470 1000,520 985,540 915,530" fill="#141414" />
      <polygon points="1065,470 1118,448 1112,478" fill="#555" />
      <polygon points="630,775 640,640 690,730" fill="#161616" />
      <polygon points="870,880 960,770 1040,790 1040,830 960,900 880,930 835,890" fill="#1e1e1e" />
      <polygon points="620,890 680,840 750,885 700,925 640,905" fill="#1e1e1e" />
      <polygon points="910,1020 1010,950 1130,935 1130,1010 1090,1060 1030,1040" fill="#202020" />
      <polygon points="1150,1100 1268,1135 1250,1220 1150,1170" fill="#161616" />
      <polygon points="1130,1060 1172,1080 1145,1115" fill="#c4c4c4" />
      <polygon points="840,960 920,920 930,950 880,985 840,985" fill="#2a2a2a" />
      <polygon points="705,1470 770,1310 790,1200 820,1190 850,1250 855,1360 815,1385 925,1365 950,1365" fill="#2e2e2e" />
      <polygon points="705,1470 815,1385 925,1365 960,1360" fill="#777" />
      <polygon points="735,150 745,260 770,480 860,540 890,610 920,715 960,755 880,840 820,895 760,895 745,860 755,815 680,715 630,560 615,430 595,395 625,290 690,190" fill="#bcbcbc" />
      <polygon points="595,395 640,300 620,440" fill="#d0d0d0" />
      <polygon points="800,775 890,715 920,715 880,775 810,815" fill="#8a8a8a" />
      <polygon points="910,720 975,690 925,770 860,795" fill="#474747" />
      <polygon points="750,815 800,812 860,800 955,755 880,850 830,895 770,900 745,870" fill="#d8d8d8" />
      <polygon points="790,835 860,810 800,880" fill="#999" />
      <polygon points="990,220 1030,280 1050,345 1020,500 1005,530 970,550 970,590 1000,680 1040,770 1000,760 980,740 985,640 965,600 970,540 1000,510 990,490 1015,380 1030,320" fill="#b8b8b8" />
      <polygon points="1000,440 1008,510 990,490" fill="#f0f0f0" />
      <polygon points="1040,770 1090,720 1090,760 1040,780" fill="#333" />
      <polygon points="1040,780 1115,800 1095,835" fill="#555" />
      <polygon points="165,1005 200,900 270,830 300,815 280,900 262,930 275,1020 295,1035 230,1040 170,1015" fill="#505050" />
      <polygon points="270,830 410,795 505,815 345,940 280,900" fill="#2c2c2c" />
      <polygon points="228,1040 275,1040 295,1130 350,1165 300,1160 240,1195 240,1220 300,1410 240,1330 200,1250 200,1190 300,1155 250,1110" fill="#555" />
      <polygon points="290,1195 345,1170 370,1195 340,1225" fill="#1e1e1e" />
      <polygon points="430,1025 560,925 550,980 520,1000 430,1030" fill="#3e3e3e" />
      <polygon points="385,1040 515,1000 525,1040 555,1000 575,970 600,965 560,1040 500,1100 450,1100" fill="#bcbcbc" />
      <polygon points="575,880 620,900 610,965 570,960" fill="#8a8a8a" />
      <polygon points="620,900 670,925 630,965 610,965" fill="#5a5a5a" />
      <polygon points="640,965 690,930 750,980 770,1015 700,1020" fill="#b0b0b0" />
      <polygon points="700,1020 770,1015 795,1060 830,1090 770,1140 720,1050" fill="#808080" />
      <polygon points="830,1090 885,1135 860,1190 800,1170" fill="#c0c0c0" />
      <polygon points="625,1150 710,1050 720,1128 650,1145" fill="#3e3e3e" />
      <polygon points="720,1050 795,1150 745,1135" fill="#9c9c9c" />
      <polygon points="650,1145 710,1128 745,1135 655,1178" fill="#dcdcdc" />
      <polygon points="655,1175 770,1145 780,1170 760,1215 670,1178" fill="#222" />
      <polygon points="535,1155 650,1155 650,1172 560,1170" fill="#4a4a4a" />
      <polygon points="800,1170 860,1190 905,1230 930,1290 925,1340 855,1370 845,1240" fill="#c0c0c0" />
      <polygon points="815,1385 855,1360 925,1340 950,1365" fill="#bcbcbc" />
      <polygon points="545,1490 600,1490 580,1495" fill="#999" />
    </g>
    </g>
  </svg>
);

const ArnoldWindow = () => (
  <div className="absolute top-[121px] left-[880px] z-30 flex h-[1136px] w-[1682px] flex-col overflow-hidden rounded-t-[14px] rounded-b-[8px] border-x-2 border-b-2 border-[#bb72be] bg-[#454545]">
    <div className="-mx-[2px] flex h-[58px] shrink-0 items-center bg-[#bb72be] pl-[14px] text-[#1c1124]">
      <MayaBadge />
      <span className="ml-[6px] text-[22.6px]">Arnold RenderView</span>
      <svg className="ml-auto" width="22" height="4" viewBox="0 0 22 4"><rect width="22" height="2.5" fill="#111" /></svg>
      <svg className="ml-[68px]" width="20" height="20" viewBox="0 0 20 20"><rect x="1" y="1" width="18" height="18" rx="2" fill="none" stroke="#111" strokeWidth="2" /></svg>
      <svg className="mr-[40px] ml-[72px]" width="21" height="21" viewBox="0 0 21 21"><path d="M1 1 L20 20 M20 1 L1 20" stroke="#111" strokeWidth="1.8" /></svg>
    </div>
    <div className="flex h-[46px] shrink-0 items-center gap-[30px] pt-[2px] pl-[17px] text-[21px] text-[#c8c8c8]"><span>File</span><span>Window</span><span>View</span><span>Render</span></div>
    <div className="flex h-[55px] shrink-0 items-center border-b-[3px] border-[#303030] pb-[1px] pl-[5px]">
      <Dropdown text="Beauty" className="h-[35px] w-[125px] text-[20px]" arrowW="w-[39px]" />
      <div className="w-[6px]" />
      <Dropdown text="perspShape" className="h-[35px] w-[270px] text-[20px]" arrowW="w-[40px]" />
      <svg className="w-[340px] shrink-0" height="44" viewBox="1288 225 340 44">
        <Handle x={1289} y1={225} y2={268} />
        <circle cx="1316" cy="251" r="14" fill="none" stroke="#aaa" strokeWidth="1.5" strokeDasharray="5 3" /><circle cx="1316" cy="251" r="8" fill="#c4c4c4" />
        <line x1="1344" x2="1344" y1="225" y2="268" stroke="#333" strokeWidth="1.5" />
        <circle cx="1371" cy="251" r="9" fill="#c4c4c4" /><text x="1371" y="255" fontSize="11" fontWeight="700" textAnchor="middle" fill="#444">A</text>
        <rect x="1413" y="241" width="20" height="20" fill="#222" /><circle cx="1423" cy="251" r="7" fill="#ddd" /><rect x="1416" y="244" width="7" height="7" fill="#222" /><rect x="1423" y="251" width="7" height="7" fill="#222" />
        <text x="1474" y="256" fontSize="13" textAnchor="middle" fill="#ccc">1:1</text>
        <line x1="1503" x2="1503" y1="225" y2="268" stroke="#333" strokeWidth="1.5" />
        <rect x="1525" y="243" width="11" height="15" fill={TEAL} /><path d="M1522 241 H1539 M1522 260 H1539 M1525 238 V263 M1536 238 V263" stroke="#ccc" strokeWidth="1.5" />
        <Aperture cx={1566} cy={251} r={7} />
        <line x1="1576" x2="1625" y1="250" y2="250" stroke="#111" strokeWidth="2.5" /><rect x="1598" y="241" width="4" height="20" fill="#ccc" />
      </svg>
      <div className="flex h-[34px] w-[68px] shrink-0 items-center rounded-[2px] bg-[#2b2b2b] pl-[4px] text-[20px] text-[#ccc]">0</div>
      <svg className="w-[60px] shrink-0" height="44" viewBox="1696 225 60 44">
        <line x1="1699" x2="1699" y1="225" y2="268" stroke="#333" strokeWidth="1.5" />
        <path d="M1720 240 H1726 L1730 245 V254 H1720 Z" fill={TEAL} /><text x="1726" y="262" fontSize="9" textAnchor="middle" fill="#ccc">LOG</text>
      </svg>
      <svg className="mr-[21px] ml-auto shrink-0" width="176" height="30" viewBox="2364 236 176 30">
        <polygon points="2367,240 2381,251 2367,262" fill="#b22a2e" />
        <path d="M2420 258 A9 10 0 1 1 2429 259" fill="none" stroke="#ccc" strokeWidth="1.5" /><polygon points="2427,255 2433,257 2428,262" fill="#ccc" />
        <path d="M2482 240 L2470 262 M2474 244 Q2490 252 2476 262 M2478 240 Q2495 252 2481 263" stroke="#6d6d6d" strokeWidth="1.5" fill="none" />
        <circle cx="2529" cy="251" r="6" fill="none" stroke="#bbb" strokeWidth="4" /><circle cx="2529" cy="251" r="9" fill="none" stroke="#bbb" strokeWidth="2.5" strokeDasharray="3.5 3.5" />
      </svg>
    </div>
    <div className="mx-[9px] mt-[9px] flex h-[890px] shrink-0 items-center justify-center bg-[#272727]">{fig}</div>
    <div className="flex flex-1 items-center pb-[3px] pl-[9px]">
      <div className="flex h-[58px] w-[1551px] shrink-0 items-center border-b-2 border-[#3e3e3e] bg-[#525252] pl-[9px] text-[20.3px] text-[#c8c8c8]">00:00:10 | 1280x720 | CPU | PrimaryCameraShape (1:1) | samples 5/2/2/2/2/2 | 3123.34 MB</div>
      <svg className="ml-[28px]" width="60" height="14" viewBox="0 0 60 14">
        <rect x="1" y="3" width="10" height="8" fill="#ccc" /><rect x="4" y="5" width="4" height="4" fill="#444" />
        <path d="M43 5 L47 9 L51 5" stroke="#999" strokeWidth="1" fill="none" />
      </svg>
    </div>
  </div>
);

const App = () => (
  <div className="relative flex h-[1842px] w-[2810px] flex-col overflow-hidden bg-[#444] font-['Noto_Sans',sans-serif]">
    <div className="flex h-[18px] shrink-0 items-end overflow-hidden bg-[#f3f3f3] text-[22.7px] leading-[30px] whitespace-nowrap text-[#8f8f8f]">
      <span className="mb-[2px] ml-[2px]">DecorationRender.ma</span>
      <span className="mb-[2px] ml-[30px]">Autodesk MAYA 2024.1: C:\Users\riley\OneDrive\Documents\College\3D Modeling\3D Modeling (Module 11)\Unit 11 Lab - All Models Rendered\DecorationRender.ma</span>
      <span className="mb-[2px] ml-[70px]">DecoMeshShape</span>
      <svg className="ml-auto self-start" width="110" height="10" viewBox="0 0 110 10">
        <rect x="2" y="-6" width="13" height="10" rx="2" fill="none" stroke="#8a8a8a" strokeWidth="1.5" />
        <path d="M85 -2 L94 8 M103 -2 L94 8" stroke="#8a8a8a" strokeWidth="1.5" />
      </svg>
    </div>
    <div className="flex h-[60px] shrink-0 items-center gap-[31.8px] pb-[3px] pl-[40px] text-[20px] text-[#c0c0c0]">
      {['File', 'Edit', 'Create', 'Select', 'Modify', 'Display', 'Windows', 'Lighting/Shading', 'Texturing', 'Render', 'Toon', 'Stereo', 'Cache', 'Arnold', 'Help'].map((m) => <span key={m}>{m}</span>)}
      <span className="ml-auto text-[#c0c0c0]">Workspace:</span>
      <Dropdown text="General*" className="-ml-[26px] mr-[20px] h-[35px] w-[341px]" arrowW="w-[41px]" />
    </div>
    <MainShelf />
    <div className="flex h-[29px] shrink-0 items-start gap-[3px] border-t-[4px] border-[#3a3a3a] pt-[8px] pl-[36px] text-[20px] leading-[40px] text-[#bdbdbd]">
      {['Curves', 'Surfaces', 'Poly Modeling', 'Sculpting', 'UV Editing', 'Rigging'].map((t) => (
        <div key={t} className={`flex h-[20px] items-start justify-center overflow-hidden rounded-t-[2px] px-[22px] ${t === 'Poly Modeling' ? 'bg-[#5a5a5a]' : 'bg-[#3c3c3c]'}`}>{t}</div>
      ))}
    </div>
    <div className="flex flex-1 items-end border-b-4 border-[#3a3a3a]">
      <div className="flex h-[83px] w-[52px] shrink-0 flex-col pb-[8px]">
        <div className="-ml-[22px] flex h-[65px] w-[58px] flex-col overflow-hidden rounded-[3px]">
          <div className="flex h-[45px] items-center justify-center bg-[#3fa9cc] text-[36px] font-bold text-white">M</div>
          <div className="flex h-[20px] items-center justify-end bg-[#2a6a85] pr-[12px] text-[14px] text-white">AYA</div>
        </div>
      </div>
      <div className="flex h-[83px] w-[312px] shrink-0 flex-col border-x-2 border-[#333] bg-[#3e3e3e]">
        <div className="flex flex-1 items-end bg-[#2e2e2e] pb-[3px] pl-[10px]">
          <div className="flex w-[256px] items-center justify-between">
            <svg width="10" height="18" viewBox="0 0 10 18"><polygon points="10,0 10,18 0,9" fill="#aaa" /></svg>
            <div className="h-[22px] w-[206px] rounded-[6px] bg-[#5e5e5e]" />
            <svg width="10" height="18" viewBox="0 0 10 18"><polygon points="0,0 0,18 10,9" fill="#aaa" /></svg>
          </div>
          <svg className="mb-[26px] ml-[14px]" width="14" height="12" viewBox="0 0 14 12"><polygon points="0,0 14,0 7,12" fill="#aaa" /></svg>
        </div>
        <div className="flex h-[14px] items-center justify-center"><div className="h-[4px] w-[97px] border-t-4 border-dotted border-[#777]" /></div>
      </div>
      <div className="relative flex h-[84px] flex-1 items-start justify-center border-2 border-[#555] bg-[linear-gradient(180deg,#767676,#848484)] pt-[35px] pr-[48px] text-[18px] font-bold text-[#e0e0e0]">
        <svg className="absolute top-[0px] left-[50px]" width="30" height="34" viewBox="0 0 30 34">
          <path d="M6 2 V26" stroke="#3dbb3d" strokeWidth="1" /><path d="M6 26 L18 16" stroke="#d22" strokeWidth="1.5" /><path d="M6 26 L18 34" stroke="#22c" strokeWidth="1.5" />
          <text x="21" y="12" fontSize="14" fontWeight="700" fill="#c81e1e">X</text><text x="17" y="26" fontSize="14" fontWeight="700" fill="#1c1cd0">Z</text>
        </svg>
        PrimaryCamera
      </div>
      <div className="flex h-[50px] w-[470px] shrink-0 gap-[3px] border-l-[4px] border-[#333] pb-[6px] pl-[6px] text-[20px] text-[#cfcfcf]">
        <div className="flex w-[277px] shrink-0 items-center justify-center bg-[#4d4d4d] pb-[4px]">Select</div>
        <div className="flex min-w-0 flex-1 items-center justify-start overflow-hidden bg-[#4d4d4d] pb-[4px] pl-[68px] whitespace-nowrap">Load Attributes</div>
      </div>
    </div>
    <TimeSlider />
    <div className="h-[4px] shrink-0 bg-[#3a3a3a]" />
    <RangeRow />
    <div className="h-[4px] shrink-0 bg-[#3a3a3a]" />
    <div className="flex h-[21px] shrink-0 items-end">
      <div className="mb-[3px] ml-[1437px] h-[14px] w-[6px] border-x-2 border-dotted border-[#777]" />
      <div className="ml-[80px] h-[5px] w-[620px] bg-[#2b2b2b]" />
      <div className="ml-[8px] h-[5px] w-[621px] bg-[#2b2b2b]" />
    </div>
    <RenderSettings />
    <Hypershade />
    <ArnoldWindow />
  </div>
);

export default App;
